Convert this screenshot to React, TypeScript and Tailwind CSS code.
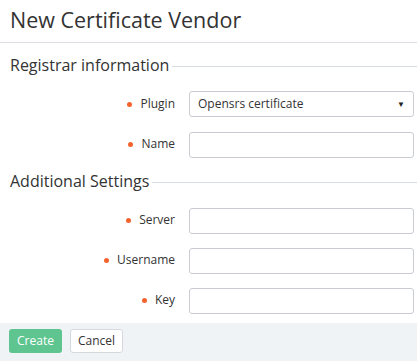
import { ReactNode } from 'react';

function Field({ label, children }: { label: string; children: ReactNode }) {
  return (
    <div className="flex items-center h-[26px]">
      <div className="w-[176px] flex items-center justify-end pr-[1px]">
        <span className="w-[5px] h-[5px] rounded-full bg-[#f4622d] mr-[8px]" />
        <span className="text-[12px] text-[#333]">{label}</span>
      </div>
      <div className="ml-[13px] w-[225px] h-[26px]">{children}</div>
    </div>
  );
}

function TextInput() {
  return (
    <input
      type="text"
      className="w-full h-full border border-[#c9cdd3] rounded-[3px] bg-white px-2 text-[12px] outline-none"
    />
  );
}

function Section({ title, children }: { title: string; children: ReactNode }) {
  return (
    <div>
      <div className="flex items-center h-[22px] pl-[10px]">
        <h2 className="text-[16px] leading-[22px] text-[#333] whitespace-nowrap">{title}</h2>
        <div className="flex-1 h-px bg-[#d8dde3] ml-[3px] mt-[2px]" />
      </div>
      <div className="flex flex-col gap-[14px] mt-[15px]">{children}</div>
    </div>
  );
}

export default function App() {
  return (
    <div className="w-[417px] h-[361px] bg-white flex flex-col" style={{ fontFamily: '"Open Sans", sans-serif' }}>
      <div className="h-[43px] border-b border-[#dde1e7] px-[10px] pt-[5px]">
        <h1 className="text-[21.5px] leading-[30px] text-[#333]">New Certificate Vendor</h1>
      </div>

      <div className="pt-[11px] flex flex-col gap-[13px]">
        <Section title="Registrar information">
          <Field label="Plugin">
            <div className="w-full h-full border border-[#c9cdd3] rounded-[3px] bg-white flex items-center justify-between pl-[8px] pr-[8px]">
              <span className="text-[12px] text-[#333]">Opensrs certificate</span>
              <span className="text-[8px] text-[#222] leading-none">▼</span>
            </div>
          </Field>
          <Field label="Name">
            <TextInput />
          </Field>
        </Section>

        <Section title="Additional Settings">
          <Field label="Server">
            <TextInput />
          </Field>
          <Field label="Username">
            <TextInput />
          </Field>
          <Field label="Key">
            <TextInput />
          </Field>
        </Section>
      </div>

      <div className="mt-auto h-[38px] bg-[#f0f3f6] flex items-start gap-[8px] px-[9px] pt-[6px]">
        <button className="h-[24px] w-[53px] rounded-[3px] bg-[#5ec590] text-white text-[12px]">Create</button>
        <button className="h-[24px] w-[53px] rounded-[3px] bg-white border border-[#d5d9de] text-[#333] text-[12px]">Cancel</button>
      </div>
    </div>
  );
}
